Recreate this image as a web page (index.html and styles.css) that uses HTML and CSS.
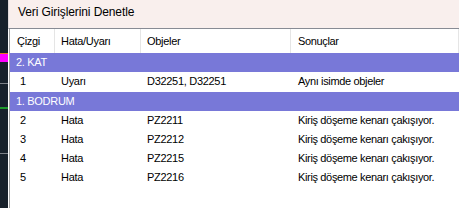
FILE: index.html
```html
<!DOCTYPE html>
<html lang="tr">
<head>
<meta charset="utf-8">
<title>Veri Girişlerini Denetle</title>
<link rel="stylesheet" href="styles.css">
</head>
<body>
<div class="desk">
  <div class="desk-gap g1"></div>
  <div class="line orange"></div>
  <div class="line magenta"></div>
  <div class="desk-gap g2"></div>
  <div class="line gray"></div>
  <div class="desk-gap g3"></div>
  <div class="line green"></div>
  <div class="desk-gap g4"></div>
  <div class="line gray"></div>
</div>
<div class="window">
  <div class="titlebar">Veri Girişlerini Denetle</div>
  <div class="list">
    <div class="row header">
      <div class="cell c1">Çizgi</div>
      <div class="cell c2">Hata/Uyarı</div>
      <div class="cell c3">Objeler</div>
      <div class="cell c4">Sonuçlar</div>
    </div>
    <div class="group g-first">2. KAT</div>
    <div class="row item tall">
      <div class="cell c1 num">1</div>
      <div class="cell c2">Uyarı</div>
      <div class="cell c3">D32251, D32251</div>
      <div class="cell c4">Aynı isimde objeler</div>
    </div>
    <div class="group">1. BODRUM</div>
    <div class="row item">
      <div class="cell c1 num">2</div>
      <div class="cell c2">Hata</div>
      <div class="cell c3">PZ2211</div>
      <div class="cell c4">Kiriş döşeme kenarı çakışıyor.</div>
    </div>
    <div class="row item">
      <div class="cell c1 num">3</div>
      <div class="cell c2">Hata</div>
      <div class="cell c3">PZ2212</div>
      <div class="cell c4">Kiriş döşeme kenarı çakışıyor.</div>
    </div>
    <div class="row item">
      <div class="cell c1 num">4</div>
      <div class="cell c2">Hata</div>
      <div class="cell c3">PZ2215</div>
      <div class="cell c4">Kiriş döşeme kenarı çakışıyor.</div>
    </div>
    <div class="row item">
      <div class="cell c1 num">5</div>
      <div class="cell c2">Hata</div>
      <div class="cell c3">PZ2216</div>
      <div class="cell c4">Kiriş döşeme kenarı çakışıyor.</div>
    </div>
  </div>
</div>
</body>
</html>
```

FILE: styles.css
```css
html, body {
  margin: 0;
  padding: 0;
  width: 459px;
  height: 208px;
  overflow: hidden;
}
body {
  display: flex;
  flex-direction: row;
  font-family: "Liberation Sans", Arial, sans-serif;
  background: #ffffff;
}
.desk {
  width: 8px;
  flex: none;
  background: #18212b;
  display: flex;
  flex-direction: column;
}
.desk-gap.g1 { height: 53px; }
.desk-gap.g2 { height: 21px; }
.desk-gap.g3 { height: 23px; }
.desk-gap.g4 { height: 44px; }
.line { width: 100%; }
.line.orange { height: 1px; background: #e8761e; }
.line.magenta { height: 8px; background: #ff00ff; }
.line.gray { height: 1px; background: #7d8188; }
.line.green { height: 2px; background: #1f9a2a; }

.window {
  flex: 1;
  display: flex;
  flex-direction: column;
  background: #ffffff;
}
.titlebar {
  box-sizing: border-box;
  height: 29px;
  line-height: 25px;
  padding-left: 9px;
  background: #f9efed;
  border-left: 1px solid #e4dcdc;
  border-bottom: 1px solid #888b94;
  font-size: 12px;
  letter-spacing: -0.1px;
  color: #000000;
}
.list {
  flex: 1;
  margin-left: 1px;
  border-left: 1px solid #a3a3a3;
  font-size: 11px;
  letter-spacing: -0.3px;
  color: #000000;
}
.row {
  display: grid;
  grid-template-columns: 45px 86px 150px 1fr;
}
.header {
  height: 24px;
  line-height: 24px;
}
.header .cell {
  border-right: 1px solid #e5e5e5;
}
.cell {
  padding-left: 7px;
  white-space: nowrap;
  overflow: hidden;
}
.c2 { padding-left: 6px; }
.c3 { padding-left: 6px; }
.c4 { padding-left: 7px; letter-spacing: -0.35px; }
.num { padding-left: 10px; }
.item {
  height: 19px;
  line-height: 19px;
}
.item.tall {
  height: 20px;
  line-height: 19px;
}
.group {
  height: 19px;
  line-height: 19px;
  background: #7878d8;
  color: #ffffff;
  padding-left: 6px;
}
```
